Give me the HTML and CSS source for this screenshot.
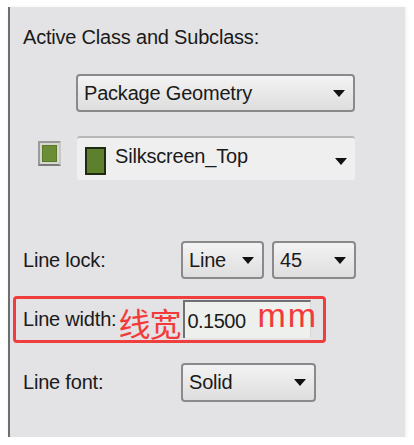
FILE: index.html
```html
<!DOCTYPE html>
<html>
<head>
<meta charset="utf-8">
<link rel="stylesheet" href="styles.css">
</head>
<body>
<div class="panel">
  <div class="title">Active Class and Subclass:</div>
  <div class="row-class">
    <div class="select select-class"><span class="sel-text">Package Geometry</span><span class="arrow"></span></div>
  </div>
  <div class="row-sub">
    <span class="check"><span class="check-fill"></span></span>
    <div class="select select-sub"><span class="swatch"></span><span class="sel-text">Silkscreen_Top</span><span class="arrow"></span></div>
  </div>
  <div class="row row-lock">
    <span class="label">Line lock:</span>
    <div class="select select-line"><span class="sel-text">Line</span><span class="arrow"></span></div>
    <div class="select select-angle"><span class="sel-text">45</span><span class="arrow"></span></div>
  </div>
  <div class="highlight">
    <span class="label label-width">Line width:</span>
    <span class="note note-cn">线宽</span>
    <div class="input-wrap">
      <div class="input">0.1500</div>
      <span class="note note-mm">mm</span>
    </div>
  </div>
  <div class="row row-font">
    <span class="label">Line font:</span>
    <div class="select select-font"><span class="sel-text">Solid</span><span class="arrow"></span></div>
  </div>
</div>
</body>
</html>
```
FILE: styles.css
```css
html, body {
  margin: 0;
  padding: 0;
  background: #ffffff;
}
body {
  font-family: "Liberation Sans", Arial, sans-serif;
  color: #1a1a1a;
}
.panel {
  box-sizing: border-box;
  margin: 7px 0 0 8px;
  width: 397px;
  height: 430px;
  background: #e3e2e4;
  border-left: 2px solid #6e6e70;
  box-shadow: 1px 1px 4px rgba(0, 0, 0, 0.08);
  padding: 17px 0 0 13px;
  display: flex;
  flex-direction: column;
}
.title {
  font-size: 20px;
  line-height: 26px;
  height: 26px;
  letter-spacing: -0.2px;
}
.row-class {
  margin-top: 24px;
  padding-left: 53px;
  display: flex;
}
.select {
  box-sizing: border-box;
  display: flex;
  align-items: center;
  border: 2px solid #8a8a8c;
  border-radius: 4px;
  background: linear-gradient(#f3f3f3, #dedede);
  font-size: 20px;
  padding: 0 8px 0 6px;
  position: relative;
}
.sel-text {
  flex: 1;
  letter-spacing: -0.2px;
}
.arrow {
  width: 0;
  height: 0;
  border-left: 6px solid transparent;
  border-right: 6px solid transparent;
  border-top: 7px solid #111;
}
.select-class {
  width: 279px;
  height: 38px;
}
.row-sub {
  margin-top: 24px;
  display: flex;
  align-items: flex-start;
}
.check {
  box-sizing: border-box;
  margin: 5px 0 0 15px;
  width: 23px;
  height: 25px;
  border: 2px solid #9a9a9a;
  border-right-color: #c8c8c8;
  border-bottom-color: #7a7a7a;
  background: #d6d8d0;
  padding: 2px;
  display: flex;
}
.check-fill {
  flex: 1;
  background: #6a8d36;
  border: 1px solid #587a2a;
}
.select-sub {
  margin-left: 16px;
  width: 278px;
  height: 44px;
  border: none;
  border-top: 2px solid #b8b8ba;
  border-radius: 3px;
  background: #efeff0;
  padding: 0 8px 0 8px;
}
.select-sub .sel-text {
  margin-top: -6px;
}
.select-sub .arrow {
  margin-top: 4px;
}
.swatch {
  box-sizing: border-box;
  width: 21px;
  height: 28px;
  background: #5e7f2c;
  border: 2px solid #1f2a12;
  margin-right: 9px;
  margin-top: 3px;
}
.row {
  display: flex;
  align-items: center;
}
.label {
  font-size: 20px;
  letter-spacing: -0.2px;
  width: 158px;
  flex: none;
}
.row-lock {
  margin-top: 61px;
  height: 38px;
}
.select-line {
  width: 83px;
  height: 38px;
  margin-right: 8px;
}
.select-angle {
  width: 84px;
  height: 38px;
}
.highlight {
  box-sizing: border-box;
  margin: 17px 0 0 -10px;
  width: 313px;
  height: 47px;
  border: 3px solid #f03d3d;
  border-radius: 4px;
  display: flex;
  align-items: center;
  padding-left: 7px;
}
.label-width {
  width: auto;
  margin-right: 2px;
}
.note {
  color: #f23a3a;
  font-family: "Noto Sans CJK SC", "Liberation Sans", sans-serif;
}
.note-cn {
  font-size: 32px;
  line-height: 40px;
  margin-top: 4px;
  letter-spacing: -1px;
}
.input-wrap {
  position: relative;
  align-self: flex-start;
  margin-top: 1px;
  margin-left: 3px;
}
.input {
  box-sizing: border-box;
  width: 128px;
  height: 38px;
  border-top: 2px solid #707070;
  border-left: 2px solid #707070;
  border-right: 1px solid #d8d8d8;
  background: #eef0ee;
  font-size: 20px;
  font-family: "Liberation Sans", Arial, sans-serif;
  letter-spacing: -0.5px;
  padding: 8px 0 0 2px;
}
.note-mm {
  position: absolute;
  left: 74px;
  top: -4px;
  font-family: "Liberation Sans", Arial, sans-serif;
  font-size: 34px;
  letter-spacing: 2px;
}
.row-font {
  margin-top: 20px;
  height: 39px;
}
.select-font {
  width: 135px;
  height: 39px;
}
```
